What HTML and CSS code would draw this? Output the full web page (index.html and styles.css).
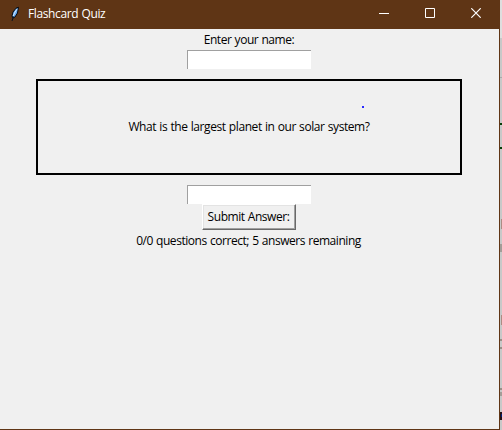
FILE: index.html
```html
<!DOCTYPE html>
<html lang="en">
<head>
<meta charset="utf-8">
<title>Flashcard Quiz</title>
<link rel="stylesheet" href="styles.css">
</head>
<body>
<div class="desktop">
  <main class="window">
    <header class="titlebar">
      <svg class="feather" width="12" height="16" viewBox="0 0 12 16">
        <path d="M9.5 1.2 L7 2.2 L4 6 L3 10 L4 12 L6 11 L8.5 7Z" fill="#69a9ee" stroke="#05080d" stroke-width="1"/>
        <path d="M8 3 L5.5 7 L4.2 10" fill="none" stroke="#d6ebff" stroke-width="1"/>
        <path d="M4.5 10.5 L3 15" fill="none" stroke="#071321" stroke-width="1"/>
      </svg>
      <h1 class="title">Flashcard Quiz</h1>
      <nav class="controls">
        <span class="control"><svg width="10" height="10"><path d="M0 5.5H10" stroke="#fff"/></svg></span>
        <span class="control"><svg width="10" height="10"><path d="M.5 .5H9.5V9.5H.5Z" fill="none" stroke="#fff"/></svg></span>
        <span class="control"><svg width="10" height="10"><path d="M.3 .3L9.7 9.7M9.7 .3L.3 9.7" stroke="#fff" stroke-width="1.2"/></svg></span>
      </nav>
    </header>
    <section class="content">
      <label class="name-label" for="name">Enter your name:</label>
      <input class="entry" id="name" type="text">
      <div class="card">
        <span class="question">What is the largest planet in our solar system?</span>
        <i class="dot"></i>
      </div>
      <input class="entry" type="text" aria-label="Answer">
      <button class="submit" type="button"><span class="submit-text">Submit Answer:</span></button>
      <p class="status">0/0 questions correct; 5 answers remaining</p>
    </section>
  </main>
  <aside class="backdrop">
    <svg width="2" height="430">
      <path d="M0 0H2V38H0Z" fill="#dedede"/>
      <path d="M0 77.5H2" stroke="#aaa"/>
      <path d="M0 124H2M0 148H2" stroke="#063f08" stroke-width="2"/>
      <path d="M1.5 219V229M1.5 315V325" stroke="#ad8c84"/>
      <path d="M1 244V252M1 392V396" stroke="#a39d98" stroke-width="2"/>
      <path d="M1 339V341M1 347V349M1 388V390" stroke="#999088" stroke-width="2"/>
      <path d="M1 412V420" stroke="#241116" stroke-width="2"/>
      <path d="M1.5 414V417" stroke="#002278"/>
    </svg>
  </aside>
</div>
</body>
</html>
```
FILE: styles.css
```css
* { box-sizing: border-box; }
body {
  margin: 0;
  overflow: hidden;
  font: 12px/16px "Open Sans", "Noto Sans", sans-serif;
  color: #000;
}
.desktop { display: flex; width: 502px; height: 430px; }
.window {
  width: 500px;
  height: 430px;
  background: #f0f0f0;
  border-right: 1px solid #5f3515;
  border-bottom: 1px solid #5f3515;
}
.backdrop { width: 2px; background: #c8c8c8; }
.backdrop svg { display: block; }
.titlebar {
  display: flex;
  align-items: center;
  height: 29px;
  padding-left: 9px;
  background: #5f3515;
  color: #fff;
}
.feather { margin-bottom: 2px; }
.title {
  margin: 0 0 1px 7px;
  font-size: 12px;
  font-weight: 400;
  letter-spacing: -0.38px;
  word-spacing: 0.5px;
  white-space: nowrap;
}
.controls { display: flex; margin: 0 0 3px auto; }
.control { display: flex; width: 46px; justify-content: center; }
.control svg { display: block; }
.content {
  display: flex;
  flex-direction: column;
  align-items: center;
  width: 498px;
  padding-top: 3px;
}
.name-label,
.question,
.submit-text,
.status {
  letter-spacing: -0.45px;
  word-spacing: 0.5px;
  white-space: nowrap;
}
.name-label { height: 18px; }
.entry {
  width: 124px;
  height: 19px;
  padding: 0 2px;
  border: 0 solid #a0a0a0;
  border-width: 1px 0 0 1px;
  border-radius: 0;
  outline: 0;
  background: #fff;
  font: inherit;
}
.card {
  position: relative;
  display: flex;
  align-items: center;
  justify-content: center;
  width: 426px;
  height: 96px;
  margin: 10px 0;
  border: 2px solid #000;
}
.question { letter-spacing: -0.42px; }
.dot {
  position: absolute;
  top: 25px;
  left: 324px;
  width: 1.5px;
  height: 2px;
  background: #2929ff;
}
.submit {
  display: flex;
  align-items: center;
  justify-content: center;
  width: 94px;
  height: 26px;
  padding: 0 1px 0 0;
  border: 1px solid;
  border-color: #fff #696969 #696969 #fff;
  background: #f0f0f0;
  box-shadow: inset -1px -1px #a0a0a0, inset 1px 1px #e3e3e3;
  color: #000;
  font: inherit;
}
.status { margin: 3px 1px 0 0; }
```
